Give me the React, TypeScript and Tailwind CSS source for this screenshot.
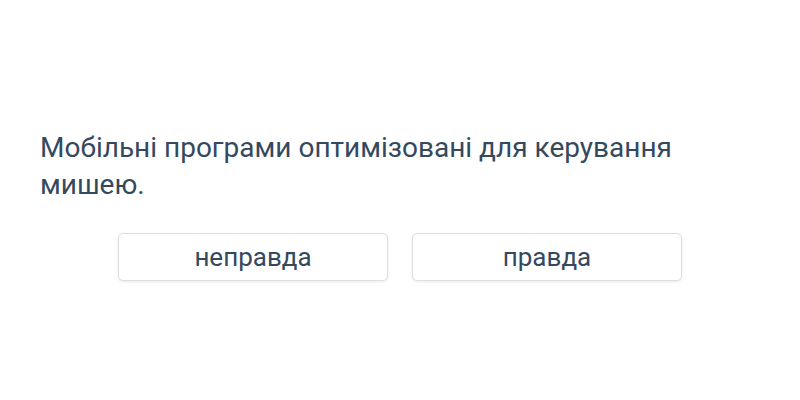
const App = () => {
  return (
    <div
      className="w-full h-[400px] bg-white flex flex-col justify-center px-10 pt-[10px]"
      style={{ fontFamily: 'Roboto, "Noto Sans", sans-serif' }}
    >
      <div className="max-w-[690px] text-[28px] leading-[37px] text-[#34495e]">
        Мобільні програми оптимізовані для керування мишею.
      </div>
      <div className="flex justify-center gap-[24px] mt-[30px]">
        <button className="w-[270px] h-[48px] bg-white border border-[#dedede] rounded-[5px] shadow-[0_1px_3px_rgba(0,0,0,0.08)] text-[26px] text-[#34495e]">
          неправда
        </button>
        <button className="w-[270px] h-[48px] bg-white border border-[#dedede] rounded-[5px] shadow-[0_1px_3px_rgba(0,0,0,0.08)] text-[26px] text-[#34495e]">
          правда
        </button>
      </div>
    </div>
  );
};

export default App;
